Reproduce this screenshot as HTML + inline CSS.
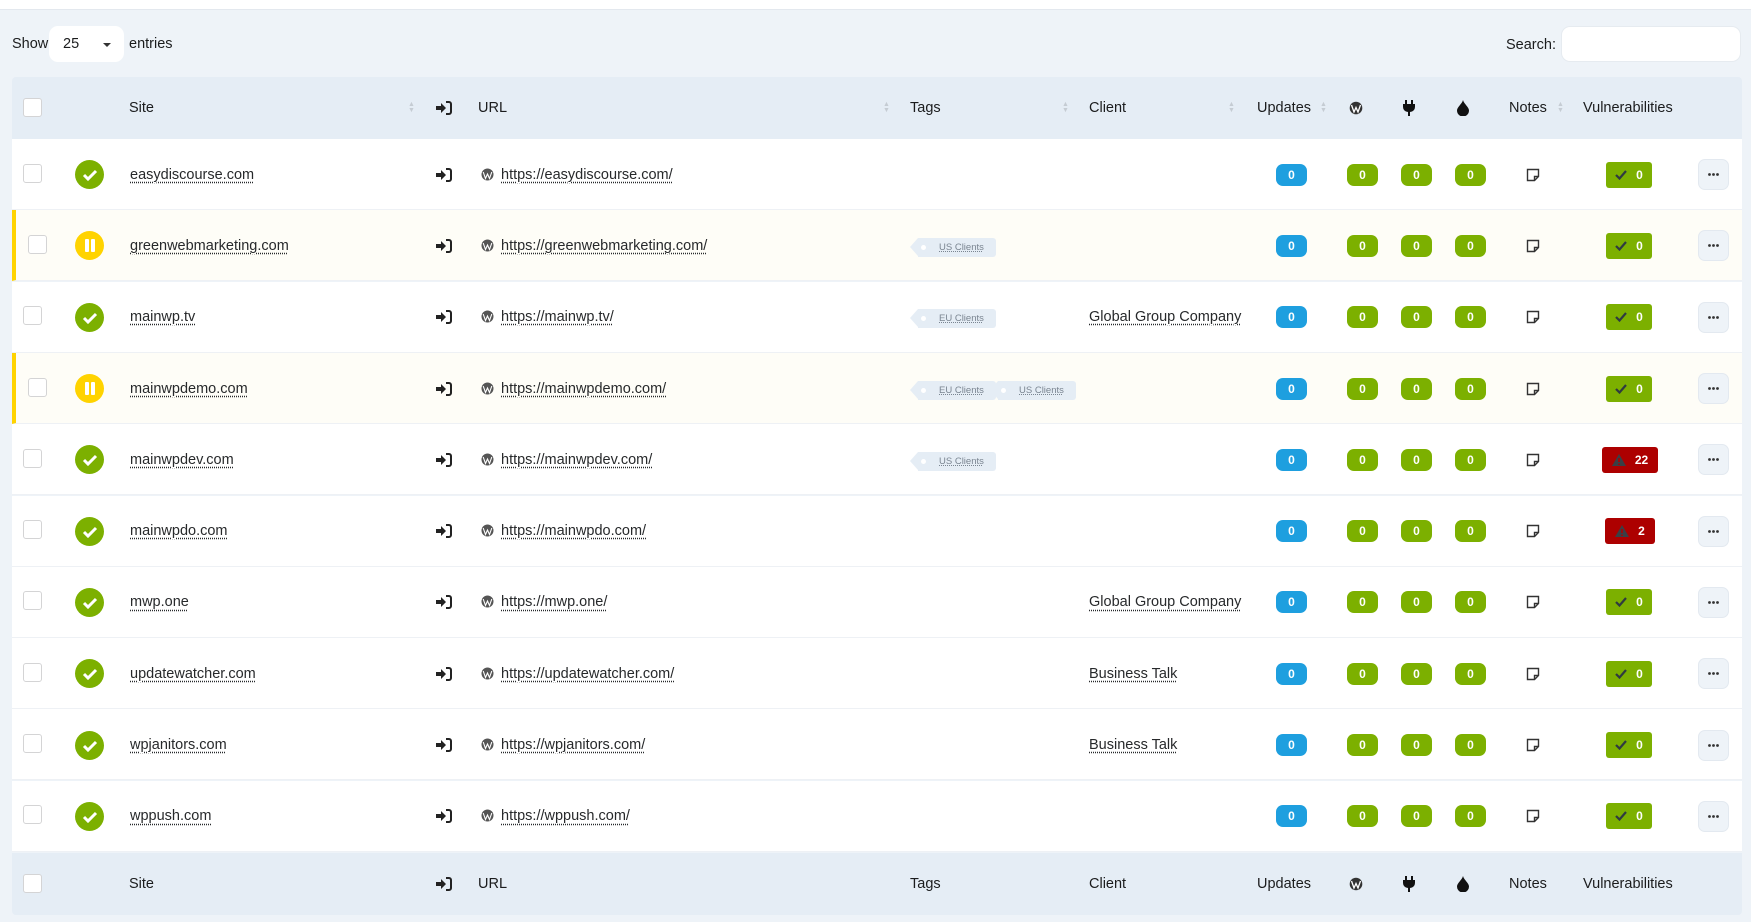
<!DOCTYPE html>
<html><head><meta charset="utf-8"><style>
*{box-sizing:border-box;margin:0;padding:0}
body{width:1751px;height:922px;background:#eef3f8;font-family:"Liberation Sans",sans-serif;color:#1b1c1d;font-size:14.5px;position:relative;overflow:hidden}
.top{position:absolute;left:0;top:0;width:1751px;height:10px;background:#fff;border-bottom:1px solid #e3e8ee}
.a{position:absolute}
.row{position:absolute;left:12px;width:1730px;height:71px;background:#fff;border-bottom:1px solid #eef1f5}
.row.p{background:#fefdf7;border-left:4px solid #ffd300}
.hd{position:absolute;left:12px;width:1730px;background:#e5edf5}
.cb{position:absolute;left:11px;width:19px;height:19px;border:1px solid #d4d4d5;border-radius:3px;background:#fff}
.st{position:absolute;left:63px;width:29px;height:29px;border-radius:50%;background:#7cb000;display:flex;align-items:center;justify-content:center}
.st.y{background:#ffd300}
.lk{position:absolute;text-decoration:underline dotted;text-underline-offset:3px;color:#27292b;white-space:nowrap}
.bd{position:absolute;width:31px;height:22px;border-radius:7px;color:#fff;font-size:12px;font-weight:bold;display:flex;align-items:center;justify-content:center}
.g{background:#7cb000}.b{background:#1e9fdf}
.v{position:absolute;height:26px;border-radius:3px;color:#fff;font-size:12px;font-weight:bold;display:flex;align-items:center;justify-content:center;gap:9px}
.dots{position:absolute;width:31px;height:31px;border-radius:7px;background:#eef3f8;border:1px solid #e3e9f0;display:flex;align-items:center;justify-content:center}
.tag{position:absolute;height:19px;background:#e5edf5;color:#7a8591;font-size:9.5px;padding:0 12px 0 21px;display:flex;align-items:center;border-radius:0 3px 3px 0;text-decoration:underline dotted}
.tag:before{content:"";position:absolute;left:-8px;top:0;border-right:8px solid #e5edf5;border-top:9.5px solid transparent;border-bottom:9.5px solid transparent}
.tag:after{content:"";position:absolute;left:3px;top:7px;width:5px;height:5px;border-radius:50%;background:#fff}
.th{position:absolute;white-space:nowrap}
.sort{position:absolute;width:6px;font-size:7px;color:#c5ccd3;line-height:6px}
</style></head><body>
<div class="top"></div>
<div class="a" style="left:12px;top:36px">Show</div>
<div class="a" style="left:49px;top:26px;width:75px;height:36px;background:#fff;border-radius:9px;padding:10px 0 0 14px">25<span style="position:absolute;right:13px;top:17px;border-left:4px solid transparent;border-right:4px solid transparent;border-top:4px solid #333"></span></div>
<div class="a" style="left:129px;top:36px">entries</div>
<div class="a" style="left:1506px;top:37px">Search:</div>
<div class="a" style="left:1561px;top:26px;width:180px;height:36px;background:#fff;border-radius:9px;border:1px solid #e6ebf0"></div>

<div class="hd" style="top:77px;height:62px;border-radius:4px 4px 0 0"></div>
<div class="hd" style="top:853px;height:62px;border-radius:0 0 4px 4px"></div>

<svg width="0" height="0" style="position:absolute"><defs>
<symbol id="login" viewBox="0 0 16 14"><path d="M0 5h5V2l5 5-5 5V9H0z" fill="#222"/><path d="M10 1h3a2 2 0 0 1 2 2v8a2 2 0 0 1-2 2h-3" stroke="#222" stroke-width="2" fill="none"/></symbol>
<symbol id="note" viewBox="0 0 14 14"><path d="M1.5 1.5h11v7l-4 4h-7z" fill="none" stroke="#333" stroke-width="1.4"/><path d="M8.5 12.5v-4h4" fill="none" stroke="#333" stroke-width="1.4"/></symbol>
</defs></svg>

<script>
var H=document.body;
function el(h){var d=document.createElement('div');d.innerHTML=h;while(d.firstChild)H.appendChild(d.firstChild);}
function head(y,sorts){
 el('<div class="cb" style="left:23px;top:'+(y-10)+'px"></div>');
 var L=[['Site',129],['URL',478],['Tags',910],['Client',1089],['Updates',1257],['Notes',1509],['Vulnerabilities',1583]];
 L.forEach(function(l){el('<div class="th" style="left:'+l[1]+'px;top:'+(y-8)+'px">'+l[0]+'</div>')});
 el('<svg class="a" style="left:436px;top:'+(y-7)+'px" width="16" height="14"><use href="#login"/></svg>');
 el('<svg class="a" style="left:1349px;top:'+(y-7)+'px" width="14" height="14"><circle cx="7" cy="7" r="6.3" fill="#333"/><path d="M2.5 4l2.5 7 2-4.5 2 4.5 2.5-7" stroke="#fff" stroke-width="1.3" fill="none"/></svg>');
 el('<svg class="a" style="left:1403px;top:'+(y-8)+'px" width="12" height="16"><path d="M3 0v4M9 0v4" stroke="#111" stroke-width="2"/><path d="M0 4h12v3a5 5 0 0 1-5 5v4H5v-4a5 5 0 0 1-5-5z" fill="#111"/></svg>');
 el('<svg class="a" style="left:1457px;top:'+(y-8)+'px" width="12" height="16"><path d="M6 0C5 4 0 7 0 10.5a6 6 0 0 0 12 0C12 7 7 4 6 0z" fill="#111"/></svg>');
 if(sorts){[408,883,1062,1228,1320,1557].forEach(function(x){el('<div class="sort" style="left:'+x+'px;top:'+(y-6)+'px">▲<br>▼</div>')});}
}
head(108,true);head(884,false);
var R=[['easydiscourse.com','https://easydiscourse.com/',0,[],'',0],
['greenwebmarketing.com','https://greenwebmarketing.com/',1,['US Clients'],'',0],
['mainwp.tv','https://mainwp.tv/',0,['EU Clients'],'Global Group Company',0],
['mainwpdemo.com','https://mainwpdemo.com/',1,['EU Clients','US Clients'],'',0],
['mainwpdev.com','https://mainwpdev.com/',0,['US Clients'],'',22],
['mainwpdo.com','https://mainwpdo.com/',0,[],'',2],
['mwp.one','https://mwp.one/',0,[],'Global Group Company',0],
['updatewatcher.com','https://updatewatcher.com/',0,[],'Business Talk',0],
['wpjanitors.com','https://wpjanitors.com/',0,[],'Business Talk',0],
['wppush.com','https://wppush.com/',0,[],'',0]];
R.forEach(function(r,i){
 var t=139+i*71.3,c=t+35.6;
 el('<div class="row'+(r[2]?' p':'')+'" style="top:'+t+'px"></div>');
 el('<div class="cb" style="left:'+(r[2]?28:23)+'px;top:'+(c-11)+'px"></div>');
 var ic=r[2]?'<svg width="12" height="13"><rect x="1" y="0" width="4" height="13" rx="1" fill="#fff"/><rect x="7" y="0" width="4" height="13" rx="1" fill="#fff"/></svg>':'<svg width="16" height="13"><path d="M2 7l4 4 8-8" stroke="#fff" stroke-width="3" fill="none"/></svg>';
 el('<div class="st'+(r[2]?' y':'')+'" style="left:75px;top:'+(c-14.5)+'px">'+ic+'</div>');
 el('<div class="lk" style="left:130px;top:'+(c-8)+'px">'+r[0]+'</div>');
 el('<svg class="a" style="left:436px;top:'+(c-7)+'px" width="16" height="14"><use href="#login"/></svg>');
 el('<svg class="a" style="left:481px;top:'+(c-7)+'px" width="13" height="13"><circle cx="6.5" cy="6.5" r="6" fill="#555"/><path d="M2.2 4l2.3 6.5 2-4.5 2 4.5 2.3-6.5" stroke="#fff" stroke-width="1.1" fill="none"/></svg>');
 el('<div class="lk" style="left:501px;top:'+(c-8)+'px">'+r[1]+'</div>');
 r[3].forEach(function(tg,j){el('<div class="tag" style="left:'+(918+j*80)+'px;top:'+(c-8)+'px">'+tg+'</div>')});
 if(r[4])el('<div class="lk" style="left:1089px;top:'+(c-8)+'px">'+r[4]+'</div>');
 el('<div class="bd b" style="left:1276px;top:'+(c-11)+'px">0</div>');
 [1347,1401,1455].forEach(function(x){el('<div class="bd g" style="left:'+x+'px;top:'+(c-11)+'px">0</div>')});
 el('<svg class="a" style="left:1526px;top:'+(c-7)+'px" width="14" height="14"><use href="#note"/></svg>');
 if(r[5])el('<div class="v" style="background:#ad0000;left:'+(r[5]>9?1602:1605)+'px;width:'+(r[5]>9?56:50)+'px;top:'+(c-13)+'px"><svg width="14" height="12"><path d="M7 0l7 12H0z" fill="#3a3f45"/><path d="M7 4v4M7 9.5v1.5" stroke="#ad0000" stroke-width="1.6"/></svg>'+r[5]+'</div>');
 else el('<div class="v" style="background:#7cb000;left:1606px;width:46px;top:'+(c-13)+'px"><svg width="12" height="10"><path d="M1 5l3.5 3.5L11 1" stroke="#2f3a40" stroke-width="2.2" fill="none"/></svg>0</div>');
 el('<div class="dots" style="left:1698px;top:'+(c-15.5)+'px"><svg width="11" height="3"><circle cx="1.5" cy="1.5" r="1.4" fill="#333"/><circle cx="5.5" cy="1.5" r="1.4" fill="#333"/><circle cx="9.5" cy="1.5" r="1.4" fill="#333"/></svg></div>');
});
</script>
</body></html>
